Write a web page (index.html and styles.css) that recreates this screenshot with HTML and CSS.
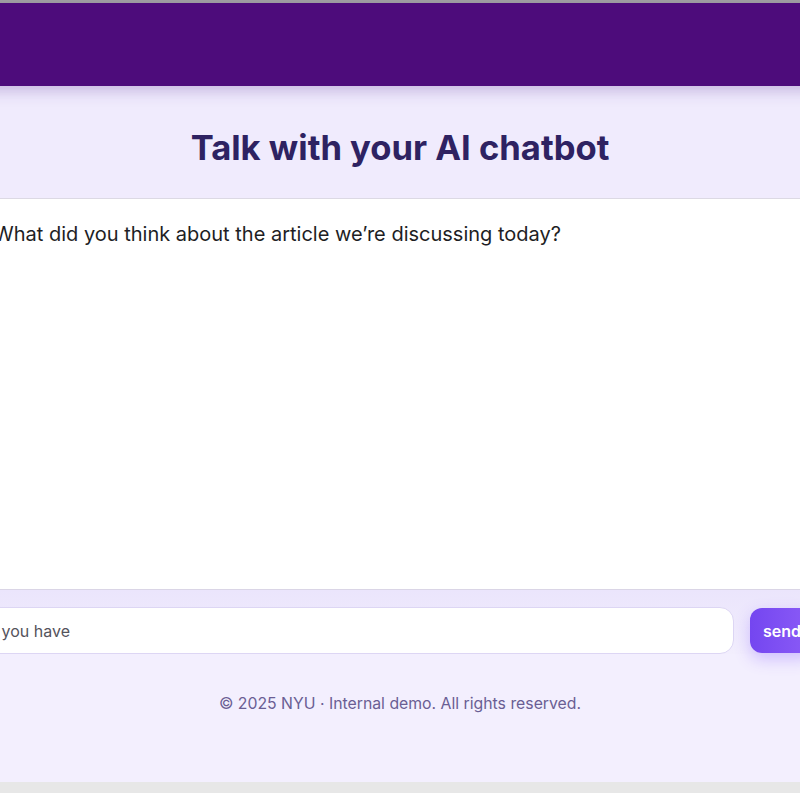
FILE: index.html
```html
<!DOCTYPE html>
<html lang="en">
<head>
    <meta charset="UTF-8">
    <meta name="viewport" content="width=device-width, initial-scale=1.0">
    <title>AI chatbot</title>
    <link rel="stylesheet" href="styles.css">
</head>
<body>
    <div class="window-line"></div>

    <div class="page">
        <div class="topbar"></div>

        <header class="title-bar">
            <h1>Talk with your AI chatbot</h1>
        </header>

        <main class="chat">
            <p class="msg">What did you think about the article we’re discussing today?</p>
        </main>

        <form class="composer">
            <input type="text" class="composer-input" placeholder="Ask any questions you have">
            <button type="button" class="send-btn">send</button>
        </form>

        <footer class="footer">© 2025 NYU · Internal demo. All rights reserved.</footer>
    </div>

    <div class="scroll-track"></div>
</body>
</html>
```

FILE: styles.css
```css
*{margin: 0; padding: 0; box-sizing: border-box;}

html, body{
    overflow: hidden;
    background-color: #fff;
    font-family: Inter, "Noto Sans", sans-serif;
}

.window-line{
    height: 3px;
    background-color: #a2a2a2;
}

.page{
    width: 860px;
    margin-left: -30px;
}

.topbar{
    height: 83px;
    background-color: #4d0c7b;
    position: relative;
    z-index: 1;
    box-shadow: 0 5px 14px rgba(90, 50, 150, 0.28);
}

.title-bar{
    height: 113px;
    padding-top: 9px;
    display: flex;
    align-items: center;
    justify-content: center;
    background-color: #f0ebfd;
    border-bottom: 1px solid #dcd9e4;
}

.title-bar h1{
    font-size: 34.6px;
    font-weight: 700;
    color: #2e2262;
}

.chat{
    height: 391px;
    padding: 20px 24px;
    background-color: #fff;
    border-bottom: 1px solid #dad5e6;
}

.msg{
    font-size: 20px;
    line-height: 30px;
    color: #1e1e24;
}

/* 입력창 + 전송 버튼 */
.composer{
    display: flex;
    gap: 16px;
    margin-left: -144px;
    padding: 17px 16px 0 16px;
    background: linear-gradient(#ebe5fc, #f2eefd);
}

.composer-input{
    flex: 1;
    height: 47px;
    padding: 0 16px;
    border: 1px solid #ddd6f4;
    border-radius: 14px;
    background-color: #fff;
    font-family: inherit;
    font-size: 16px;
    color: #333;
    outline: none;
}

.composer-input::placeholder{
    color: #55535c;
}

.send-btn{
    height: 45px;
    margin-top: 1px;
    padding: 0 13px;
    border: none;
    border-radius: 12px;
    background: linear-gradient(90deg, #7446f0, #8c5cf7);
    color: #fff;
    font-family: inherit;
    font-size: 16px;
    font-weight: 600;
    box-shadow: 0 6px 16px rgba(124, 77, 255, 0.3);
    cursor: pointer;
}

.footer{
    padding: 40px 0 68px;
    background-color: #f3effe;
    text-align: center;
    font-size: 15.8px;
    line-height: 20px;
    color: #6a5e94;
}

.scroll-track{
    height: 11px;
    background-color: #e7e7e7;
}
```
